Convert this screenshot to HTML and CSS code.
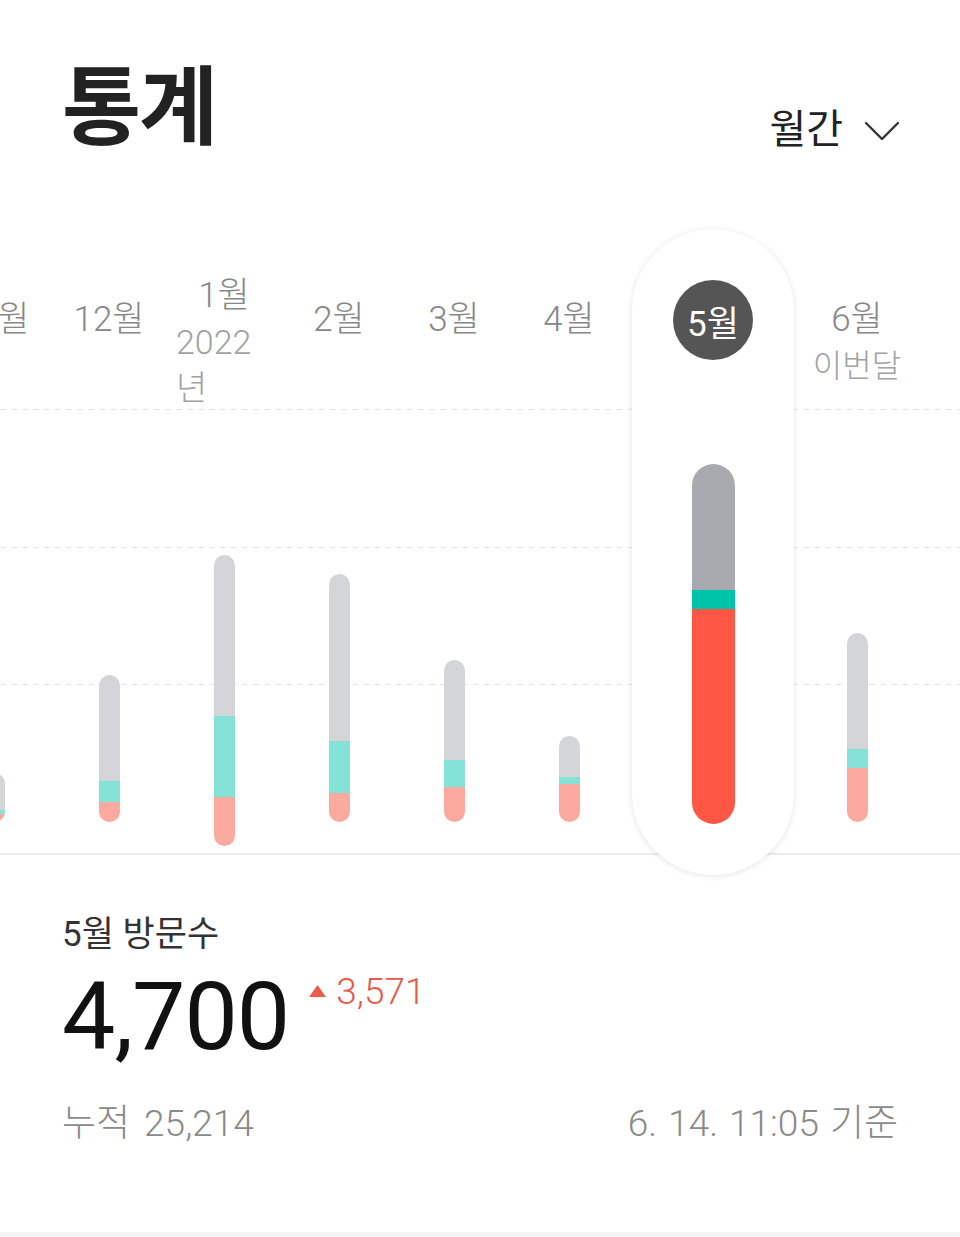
FILE: index.html
```html
<!DOCTYPE html>
<html lang="ko">
<head>
<meta charset="utf-8">
<title>통계</title>
<link rel="stylesheet" href="styles.css">
</head>
<body>
<div class="page">
  <header class="header">
    <h1 class="title">통계</h1>
    <button class="period">
      <span>월간</span>
      <svg class="chev" width="36" height="20" viewBox="0 0 36 20"><polyline points="2,2 18,18 34,2" fill="none" stroke="#333" stroke-width="2.4" stroke-linecap="round" stroke-linejoin="round"/></svg>
    </button>
  </header>

  <section class="chart">
    <div class="row">
      <div class="col">
        <div class="label"><span class="month">11월</span></div>
        <div class="bars"><div class="bar"><i class="seg gray" style="height:37px"></i><i class="seg teal" style="height:4px"></i><i class="seg pink" style="height:8px"></i></div></div>
      </div>
      <div class="col">
        <div class="label"><span class="month">12월</span></div>
        <div class="bars"><div class="bar"><i class="seg gray" style="height:106px"></i><i class="seg teal" style="height:21px"></i><i class="seg pink" style="height:20px"></i></div></div>
      </div>
      <div class="col">
        <div class="label label--raised"><span class="month">1월</span><span class="sub sub--year">2022년</span></div>
        <div class="bars"><div class="bar bar--low"><i class="seg gray" style="height:161px"></i><i class="seg teal" style="height:81px"></i><i class="seg pink" style="height:49px"></i></div></div>
      </div>
      <div class="col">
        <div class="label"><span class="month">2월</span></div>
        <div class="bars"><div class="bar"><i class="seg gray" style="height:167px"></i><i class="seg teal" style="height:52px"></i><i class="seg pink" style="height:29px"></i></div></div>
      </div>
      <div class="col">
        <div class="label"><span class="month">3월</span></div>
        <div class="bars"><div class="bar"><i class="seg gray" style="height:100px"></i><i class="seg teal" style="height:27px"></i><i class="seg pink" style="height:35px"></i></div></div>
      </div>
      <div class="col">
        <div class="label"><span class="month">4월</span></div>
        <div class="bars"><div class="bar"><i class="seg gray" style="height:41px"></i><i class="seg teal" style="height:7px"></i><i class="seg pink" style="height:38px"></i></div></div>
      </div>
      <div class="col col--active">
        <div class="card">
          <div class="label label--active"><span class="pill">5월</span></div>
          <div class="bars bars--active"><div class="bar bar--active"><i class="seg gray-dark" style="height:126px"></i><i class="seg teal-dark" style="height:19px"></i><i class="seg red" style="height:215px"></i></div></div>
        </div>
      </div>
      <div class="col">
        <div class="label"><span class="month">6월</span><span class="sub">이번달</span></div>
        <div class="bars"><div class="bar"><i class="seg gray" style="height:116px"></i><i class="seg teal" style="height:19px"></i><i class="seg pink" style="height:54px"></i></div></div>
      </div>
    </div>
  </section>

  <section class="stats">
    <div class="stats-title">5월 방문수</div>
    <div class="stats-main">
      <span class="big">4,700</span>
      <span class="delta">
        <svg class="tri" width="17" height="12" viewBox="0 0 17 12"><polygon points="8.5,0 17,12 0,12" fill="#ec5b4b"/></svg>
        <span>3,571</span>
      </span>
    </div>
    <div class="stats-foot">
      <span class="total">누적 25,214</span>
      <span class="stamp">6. 14. 11:05 기준</span>
    </div>
  </section>
  <div class="divider"></div>
</div>
</body>
</html>
```

FILE: styles.css
```css
* { box-sizing: border-box; }

html, body {
  margin: 0;
  padding: 0;
  background: #ffffff;
}

body {
  font-family: "Roboto", "Noto Sans CJK KR", sans-serif;
  color: #222;
  overflow: hidden;
}

.page {
  width: 960px;
  overflow: hidden;
}

/* Header */
.header {
  height: 229px;
  display: flex;
  justify-content: space-between;
  align-items: flex-start;
  padding: 59px 60px 0 62px;
}

.title {
  margin: 0;
  font-size: 86px;
  line-height: 100px;
  font-weight: 700;
  color: #222;
  letter-spacing: -2px;
}

.period {
  margin-top: 47px;
  display: flex;
  align-items: center;
  gap: 21px;
  border: 0;
  background: none;
  padding: 0;
  font-family: inherit;
  font-size: 40px;
  line-height: 48px;
  color: #222;
}

.chev { display: block; margin-top: 2px; }

/* Chart */
.chart {
  height: 646px;
  background:
    linear-gradient(#ebebeb, #ebebeb) 0 624px / 100% 2px no-repeat,
    repeating-linear-gradient(to right, #e6e6e6 0 6px, transparent 6px 11px) 0 180px / 100% 1px no-repeat,
    repeating-linear-gradient(to right, #e6e6e6 0 6px, transparent 6px 11px) 0 318px / 100% 1px no-repeat,
    repeating-linear-gradient(to right, #e6e6e6 0 6px, transparent 6px 11px) 0 455px / 100% 1px no-repeat;
}

.row {
  display: flex;
  height: 100%;
  margin-left: -63.5px;
}

.col {
  flex: 0 0 115px;
  width: 115px;
  height: 100%;
  display: flex;
  flex-direction: column;
  align-items: center;
}

.col--active {
  flex-basis: 173px;
  width: 173px;
}

.card {
  width: 162px;
  height: 100%;
  border-radius: 81px;
  background: #fff;
  box-shadow: 0 1px 6px rgba(0, 0, 0, 0.11);
  display: flex;
  flex-direction: column;
  align-items: center;
}

.label {
  display: flex;
  flex-direction: column;
  align-items: center;
  padding-top: 68px;
  width: 96px;
}

.label--raised { padding-top: 44px; }

.month {
  font-size: 35px;
  line-height: 46px;
  font-weight: 300;
  color: #878787;
  white-space: nowrap;
}

.sub {
  font-size: 32px;
  line-height: 46px;
  font-weight: 300;
  color: #a2a2a2;
}

.sub--year {
  align-self: stretch;
  text-align: left;
  font-size: 34px;
}

.label--active { padding-top: 51px; width: auto; }

.pill {
  width: 80px;
  height: 80px;
  border-radius: 50%;
  background: #555555;
  color: #fff;
  display: flex;
  align-items: center;
  justify-content: center;
  font-size: 35px;
  font-weight: 400;
}

.bars {
  flex: 1;
  display: flex;
  flex-direction: column;
  justify-content: flex-end;
  align-items: center;
  padding-bottom: 53px;
}

.bars--active { padding-bottom: 51px; }

.bar {
  width: 21px;
  border-radius: 11px;
  overflow: hidden;
  display: flex;
  flex-direction: column;
}

.bar--low { margin-bottom: -24px; }

.bar--active {
  width: 43px;
  border-radius: 22px;
}

.seg { display: block; flex: 0 0 auto; }
.gray { background: #d4d5d9; }
.teal { background: #84e3d6; }
.pink { background: #fca9a0; }
.gray-dark { background: #a7aaae; }
.teal-dark { background: #00c4a9; }
.red { background: #ff5646; }

/* Stats */
.stats {
  padding: 38px 62px 86px 62px;
}

.stats-title {
  font-size: 35px;
  line-height: 44px;
  color: #333;
}

.stats-main {
  margin-top: 10px;
  display: flex;
  align-items: flex-start;
}

.big {
  font-size: 95px;
  line-height: 100px;
  font-weight: 400;
  color: #111;
  letter-spacing: -1px;
}

.delta {
  margin-left: 20px;
  margin-top: 6px;
  display: flex;
  align-items: flex-start;
  gap: 10px;
  font-size: 37px;
  line-height: 38px;
  font-weight: 300;
  color: #e65a4a;
}

.tri { display: block; margin-top: 12px; }

.stats-foot {
  margin-top: 35px;
  display: flex;
  justify-content: space-between;
  font-size: 37px;
  line-height: 44px;
  font-weight: 300;
  color: #8a8a8a;
}

.total { word-spacing: 5px; }
.stamp { word-spacing: 2px; }

.divider {
  height: 8px;
  background: #f4f4f4;
}
```
